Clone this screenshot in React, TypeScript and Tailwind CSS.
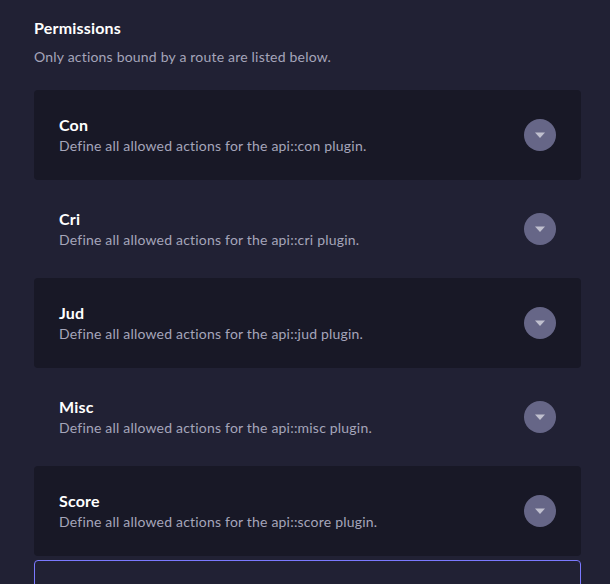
const plugins = [
  { name: "Con", id: "con" },
  { name: "Cri", id: "cri" },
  { name: "Jud", id: "jud" },
  { name: "Misc", id: "misc" },
  { name: "Score", id: "score" },
];

const Caret = () => (
  <svg width="12" height="8" viewBox="0 0 12 8" aria-hidden="true">
    <path d="M1 1.5h10L6 7z" fill="#c0c0cf" />
  </svg>
);

export default function App() {
  return (
    <div
      className="h-[584px] w-full overflow-hidden bg-[#212134] pt-4 pr-[29px] pl-[34px] tracking-[0.2px]"
      style={{ fontFamily: 'Lato, "Noto Sans", sans-serif' }}
    >
      <h2 className="text-base leading-6 font-bold text-[#ffffff]">Permissions</h2>
      <p className="mt-[7px] text-sm leading-5 text-[#a5a5ba]">
        Only actions bound by a route are listed below.
      </p>
      <div className="mt-[23px] flex flex-col gap-1">
        {plugins.map((p, i) => (
          <div
            key={p.id}
            className={
              "flex items-center justify-between rounded py-6 pr-[25px] pl-[25px] " +
              (i % 2 === 0 ? "bg-[#181826]" : "")
            }
          >
            <div className="flex flex-col">
              <span className="text-base leading-[22px] font-bold text-[#ffffff]">
                {p.name}
              </span>
              <span className="text-sm leading-5 text-[#a5a5ba]">
                Define all allowed actions for the api::{p.id} plugin.
              </span>
            </div>
            <button className="flex h-8 w-8 items-center justify-center rounded-full bg-[#666687]">
              <Caret />
            </button>
          </div>
        ))}
        <div className="h-[90px] shrink-0 rounded border border-[#7b79ff]" />
      </div>
    </div>
  );
}
